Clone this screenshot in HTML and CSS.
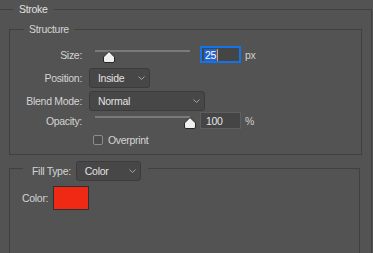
FILE: index.html
```html
<html>
<head>
  <link rel="stylesheet" href="styles.css">
</head>
<body>
  <!-- Stroke layer style panel -->
  <fieldset class="group panel">
    <legend class="group-title panel-title">Stroke</legend>

    <fieldset class="group structure">
      <legend class="group-title">Structure</legend>

      <div class="row row-size">
        <span class="row-label">Size:</span>
        <div class="slider">
          <div class="slider-track"></div>
          <svg class="slider-thumb thumb-size" viewBox="0 0 12 12" width="12" height="12"><path d="M6 0.5 L11.5 6 V10 Q11.5 11.5 10 11.5 H2 Q0.5 11.5 0.5 10 V6 Z" fill="#f0f0f0" stroke="#262626"/></svg>
        </div>
        <div class="num-input is-focused"><span class="sel">25</span><span class="caret"></span></div>
        <span class="unit">px</span>
      </div>

      <div class="row row-position">
        <span class="row-label">Position:</span>
        <div class="dropdown dropdown-position">
          <span>Inside</span>
          <svg class="chevron" viewBox="0 0 7 4" width="7" height="4"><polyline points="0.5,0.5 3.5,3.5 6.5,0.5" fill="none" stroke="#a3a3a3"/></svg>
        </div>
      </div>

      <div class="row row-blend">
        <span class="row-label">Blend Mode:</span>
        <div class="dropdown dropdown-blend">
          <span>Normal</span>
          <svg class="chevron" viewBox="0 0 7 4" width="7" height="4"><polyline points="0.5,0.5 3.5,3.5 6.5,0.5" fill="none" stroke="#a3a3a3"/></svg>
        </div>
      </div>

      <div class="row row-opacity">
        <span class="row-label">Opacity:</span>
        <div class="slider">
          <div class="slider-track"></div>
          <svg class="slider-thumb thumb-opacity" viewBox="0 0 12 12" width="12" height="12"><path d="M6 0.5 L11.5 6 V10 Q11.5 11.5 10 11.5 H2 Q0.5 11.5 0.5 10 V6 Z" fill="#f0f0f0" stroke="#262626"/></svg>
        </div>
        <div class="num-input">100</div>
        <span class="unit">%</span>
      </div>

      <div class="row row-overprint">
        <span class="row-label"></span>
        <span class="checkbox"></span>
        <span>Overprint</span>
      </div>
    </fieldset>

    <fieldset class="group fill">
      <legend class="group-title fill-title">
        <span class="fill-label">Fill Type:</span>
        <div class="dropdown dropdown-fill">
          <span>Color</span>
          <svg class="chevron" viewBox="0 0 7 4" width="7" height="4"><polyline points="0.5,0.5 3.5,3.5 6.5,0.5" fill="none" stroke="#a3a3a3"/></svg>
        </div>
      </legend>

      <div class="row row-color">
        <span>Color:</span>
        <span class="swatch"></span>
      </div>
    </fieldset>
  </fieldset>
</body>
</html>
```

FILE: styles.css
```css
html, body { height: 100%; }
body {
   margin: 0;
   overflow: hidden;
   background-color: #535353;
   color: #d4d4d4;
   font-family: "Liberation Sans", Arial, sans-serif;
   font-size: 10.5px;
   letter-spacing: -0.3px;
}

/* group boxes */
.group {
   margin: 0;
   padding: 0;
   min-width: 0;
   border: 1px solid #404040;
}
.group-title { padding: 0 6px; line-height: 13px; }

.panel {
   margin: 3px 1px 0 0;
   padding: 7px 9px 0 9px;
   border-left: none;
   border-bottom: none;
}
.panel-title { margin-left: 4px; color: #e0e0e0; }

.structure { padding: 10px 0 7px 0; }
.structure > legend { margin-left: 14px; padding: 0 5px; }

.fill {
   margin: 6px 2px 0 0;
   padding: 10px 12px 80px 12px;
   border-bottom: none;
}
.fill-title {
   display: flex;
   align-items: flex-start;
   gap: 5px;
   height: 15px;
   margin-left: 1px;
   padding: 0 7px 0 9px;
}
.fill-label { line-height: 20px; }

/* rows */
.row { display: flex; align-items: center; height: 17px; }
.row-label {
   flex: none;
   width: 72px;
   margin-right: 7px;
   text-align: right;
}
.row-position { height: 20px; margin-top: 5px; }
.row-blend { height: 20px; margin-top: 3px; }
.row-opacity { margin-top: 1px; }
.row-overprint { height: 14px; margin-top: 4px; }
.row-color { height: 24px; }

/* slider */
.slider {
   position: relative;
   flex: none;
   width: 107px;
   align-self: stretch;
}
.slider-track { margin: 4px 6px 0 6px; height: 2px; background-color: #7a7a7a; }
.slider-thumb { position: absolute; top: 5px; }
.thumb-size { left: 14px; }
.thumb-opacity { left: 95px; }

/* number field */
.num-input {
   box-sizing: border-box;
   display: flex;
   align-items: center;
   width: 41px;
   height: 17px;
   margin-left: 4px;
   padding-left: 5px;
   background-color: #454545;
   border: 1px solid #5e5e5e;
   color: #e6e6e6;
}
.num-input.is-focused { border: 2px solid #1473e6; padding-left: 2px; }
.sel { background-color: #1f64d2; color: #ffffff; padding: 0 1px; line-height: 12px; }
.caret { width: 1px; height: 12px; background-color: #ff9a1f; }
.unit { margin-left: 4px; color: #cfcfcf; }

/* dropdown */
.dropdown {
   box-sizing: border-box;
   display: flex;
   align-items: center;
   justify-content: space-between;
   flex: none;
   height: 20px;
   padding: 0 4px 0 8px;
   background-color: #474747;
   border: 1px solid #3b3b3b;
   border-radius: 3px;
   color: #e2e2e2;
}
.dropdown-position { width: 61px; }
.dropdown-blend { width: 116px; }
.dropdown-fill { width: 65px; }

.checkbox {
   box-sizing: border-box;
   width: 10px;
   height: 10px;
   margin: 0 5px 0 4px;
   border: 1px solid #8c8c8c;
   border-radius: 2px;
   background-color: #4c4c4c;
}

.swatch {
   box-sizing: border-box;
   width: 36px;
   height: 24px;
   margin-left: 5px;
   border: 1px solid #2f2f2f;
   background-color: #ef2914;
}
```
